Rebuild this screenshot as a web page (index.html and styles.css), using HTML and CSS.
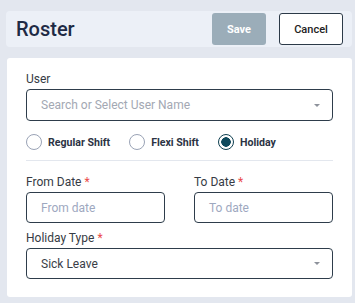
FILE: index.html
```html
<!DOCTYPE html>
<html lang="en">
<head>
  <meta charset="UTF-8" />
  <title>Roster</title>
  <link rel="stylesheet" href="styles.css">
</head>
<body>
  <div class="page-header">
    <h1>Roster</h1>
    <div class="actions">
      <button class="btn-save">Save</button>
      <button class="btn-cancel">Cancel</button>
    </div>
  </div>

  <div class="card">
    <label class="field-label">User</label>
    <div class="select select-user">
      <span class="placeholder">Search or Select User Name</span>
      <span class="caret"></span>
    </div>

    <div class="radio-row">
      <div class="radio"><span class="dot"></span>Regular Shift</div>
      <div class="radio"><span class="dot"></span>Flexi Shift</div>
      <div class="radio checked"><span class="dot"></span>Holiday</div>
    </div>

    <hr class="divider" />

    <div class="date-row">
      <div class="date-col">
        <label class="field-label">From Date <span class="req">*</span></label>
        <div class="input"><span class="placeholder">From date</span></div>
      </div>
      <div class="date-col">
        <label class="field-label">To Date <span class="req">*</span></label>
        <div class="input"><span class="placeholder">To date</span></div>
      </div>
    </div>

    <label class="field-label type-label">Holiday Type <span class="req">*</span></label>
    <div class="select">
      <span class="value">Sick Leave</span>
      <span class="caret"></span>
    </div>
  </div>
</body>
</html>
```

FILE: styles.css
```css
body {
  margin: 0;
  padding: 11px 3px 0 6px;
  background: #e3e7ef;
  font-family: Roboto, "Liberation Sans", sans-serif;
  color: #353a45;
}
.page-header {
  display: flex;
  align-items: center;
  justify-content: space-between;
  height: 36px;
  padding: 0 9px 0 10px;
  background: #ecf0f7;
  border-radius: 4px;
}
.page-header h1 {
  margin: 0;
  font-size: 20px;
  font-weight: 500;
  color: #1e2a45;
}
.actions {
  display: flex;
  gap: 13px;
}
.actions button {
  height: 32px;
  border-radius: 3px;
  font-family: Roboto, "Liberation Sans", sans-serif;
  font-size: 11px;
  cursor: pointer;
}
.btn-save {
  width: 54px;
  background: #9badb9;
  border: none;
  color: #fff;
  font-weight: 700;
}
.btn-cancel {
  width: 64px;
  background: #fff;
  border: 1px solid #2c3a48;
  color: #222;
  font-weight: 500;
}
.card {
  margin: 11px 0 0 1px;
  padding: 14px 19px 18px 19px;
  background: #fff;
  border-radius: 3px;
}
.field-label {
  display: block;
  font-size: 12px;
  line-height: 14px;
  margin-bottom: 3px;
  color: #363b44;
}
.req {
  color: #ea4a4a;
}
.select,
.input {
  box-sizing: border-box;
  display: flex;
  align-items: center;
  justify-content: space-between;
  height: 31px;
  padding: 0 12px 0 14px;
  border: 1px solid #2e3d4b;
  border-radius: 4px;
  font-size: 12px;
}
.select-user {
  height: 32px;
}
.select .placeholder {
  color: #a3a8b3;
}
.input .placeholder {
  color: #9ea8bf;
}
.value {
  color: #3a3e47;
}
.caret {
  width: 0;
  height: 0;
  border-left: 3px solid transparent;
  border-right: 3px solid transparent;
  border-top: 3px solid #8d929b;
}
.radio-row {
  display: flex;
  gap: 19px;
  margin-top: 13px;
  height: 16px;
}
.radio {
  display: flex;
  align-items: center;
  gap: 6px;
  font-size: 10.6px;
  font-weight: 700;
  color: #2c3344;
}
.dot {
  box-sizing: border-box;
  width: 16px;
  height: 16px;
  border: 1px solid #9aa3b6;
  border-radius: 50%;
}
.radio.checked .dot {
  border: 1.5px solid #0f3f50;
  background: radial-gradient(circle, #0f4a5d 0 4.5px, #fff 5px);
}
.divider {
  margin: 10px 0 0;
  border: none;
  border-top: 1px solid #e3e7ee;
}
.date-row {
  display: flex;
  justify-content: space-between;
  margin-top: 14px;
}
.date-col {
  width: 139px;
}
.type-label {
  margin-top: 8px;
}
```
